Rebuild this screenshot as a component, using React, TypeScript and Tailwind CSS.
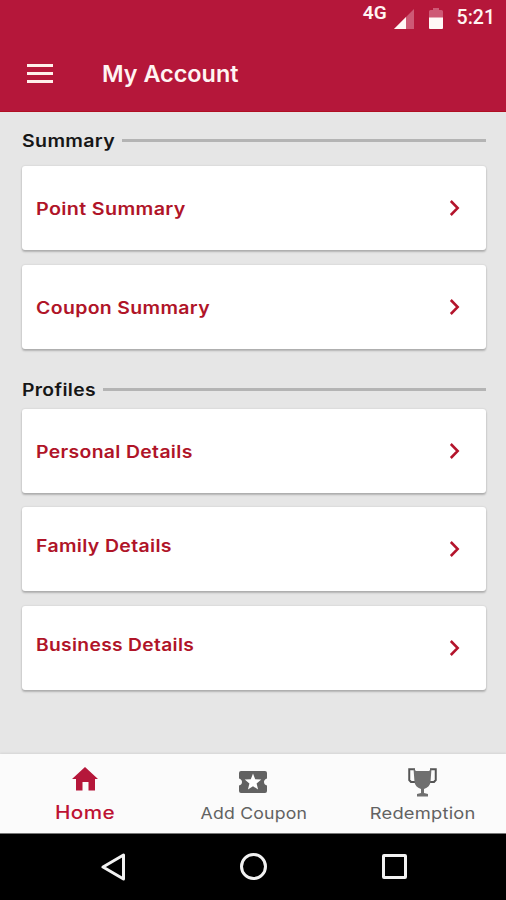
import React from "react";

const FONT = "font-['Inter','Liberation_Sans',sans-serif]";

function Chevron() {
  return (
    <svg className="h-[18px] w-[12px] shrink-0" viewBox="0 0 12 18" fill="none" stroke="#b4142c" strokeWidth="2.5">
      <path d="M1.8 2 8.7 9 1.800 16" />
    </svg>
  );
}

function Section({ title, line, fit, className }: { title: string; line: string; fit: string; className: string }) {
  return (
    <div className={`flex h-6 items-center ${className}`}>
      <h2 className="w-0 pt-[3px] whitespace-nowrap text-[17px] font-semibold text-[#161616]">
        <span className={`inline-block origin-left tracking-[0.3px] ${fit}`}>{title}</span>
      </h2>
      <div className={`h-[3px] flex-1 bg-[#b4b4b4] ${line}`} />
    </div>
  );
}

function Card({ label, fit, raised = false }: { label: string; fit: string; raised?: boolean }) {
  return (
    <button className="flex h-[84px] w-full items-center justify-between rounded-[3px] bg-white pl-[14px] pr-[25px] text-left shadow-[0_2px_2px_rgba(0,0,0,0.22),0_0_2px_rgba(0,0,0,0.16)]">
      <span className={`inline-block origin-left whitespace-nowrap text-[17px] leading-6 font-semibold tracking-[0.3px] text-[#b01428] ${fit} ${raised ? "pb-[6px]" : "pt-[2px]"}`}>
        {label}
      </span>
      <Chevron />
    </button>
  );
}

export default function App() {
  return (
    <div className={`flex h-[900px] w-[506px] flex-col overflow-hidden bg-[#e6e6e6] ${FONT}`}>
      <header className="h-[112px] shrink-0 border-b border-[#b00f22] bg-[#b5173a] text-[#fff4f2]">
        <div className="flex h-9 items-center justify-end pr-[11px] font-['Roboto',sans-serif]">
          <span className="mr-[7px] pb-[10px] text-[19px] leading-5 font-semibold">4G</span>
          <svg className="mt-[2px] h-5 w-5" viewBox="0 0 20 20">
            <path d="M20 0v20H0z" fill="#ce5975" />
            <path d="M12 8v12H0z" fill="#fff8f6" />
          </svg>
          <svg className="mt-[1px] ml-[15px] h-[21px] w-[14px]" viewBox="0 0 14 21">
            <path d="M0 3.500Q0 2 1.500 2H4V0h6v2h2.500Q14 2 14 3.500V10H0z" fill="#ce5975" />
            <path d="M0 9.500h14V20q0 1-1 1H1q-1 0-1-1z" fill="#fff8f6" />
          </svg>
          <span className="ml-[14px] text-[19.500px] font-medium">5:21</span>
        </div>
        <div className="flex h-[74px] items-center pl-[27px]">
          <div className="flex w-[26px] flex-col gap-[5px]">
            <div className="h-[3px] bg-[#fff0eb]" />
            <div className="h-[3px] bg-[#fff0eb]" />
            <div className="h-[3px] bg-[#fff0eb]" />
          </div>
          <h1 className="ml-[49px] pt-[1px] text-[22.500px] font-semibold">
            <span className="inline-block origin-left scale-x-[1.04] whitespace-nowrap">My Account</span>
          </h1>
        </div>
      </header>
      <main className="flex-1 pr-[20px] pl-[22px]">
        <Section title="Summary" line="ml-[100px]" fit="scale-x-[1.15]" className="mt-[16px]" />
        <div className="mt-[14px] flex flex-col gap-[14.5px]">
          <Card label="Point Summary" fit="scale-x-[1.16]" />
          <Card label="Coupon Summary" fit="scale-x-[1.145]" />
        </div>
        <Section title="Profiles" line="ml-[81px]" fit="scale-x-[1.135]" className="mt-[28.500px]" />
        <div className="mt-[7.5px] flex flex-col gap-[14.5px]">
          <Card label="Personal Details" fit="scale-x-[1.14]" />
          <Card label="Family Details" fit="scale-x-[1.145]" raised />
          <Card label="Business Details" fit="scale-x-[1.13]" raised />
        </div>
      </main>
      <nav className="grid h-[80px] shrink-0 grid-cols-3 border-b border-[#777] bg-[#fbfbfb] text-[#626262] shadow-[0_-1px_2px_rgba(0,0,0,0.08)]">
        <div className="flex flex-col items-center pl-[1px] text-[#b5173a]">
          <svg className="mt-[13px] h-[24px] w-[26px]" viewBox="0 0 26 24" fill="currentColor">
            <path d="M13 0 26 12h-3v11.500h-6.500v-8.500h-6v8.500H4V12H0z" />
          </svg>
          <span className="mt-[10px] inline-block scale-x-[1.15] text-[18px] leading-6 font-medium tracking-[0.3px] text-[#bd1233]">Home</span>
        </div>
        <div className="flex flex-col items-center pl-[1px]">
          <svg className="mt-[17px] h-[22px] w-[28px]" viewBox="0 0 28 22">
            <path d="M2 0h24q2 0 2 2v5.500q-3 1-3 3.500t3 3.500V20q0 2-2 2H2q-2 0-2-2v-5.500q3-1 3-3.500T0 7.500V2q0-2 2-2z" fill="#626262" />
            <path d="m14 2.500 2.200 5.700 6.100.4-4.700 3.900 1.500 6-5.100-3.300-5.100 3.300 1.500-6-4.700-3.900 6.100-.4z" fill="#fff" />
          </svg>
          <span className="mt-[8px] inline-block scale-x-[1.07] whitespace-nowrap text-[16.500px] leading-6 tracking-[0.2px]">Add Coupon</span>
        </div>
        <div className="flex flex-col items-center pl-[1px]">
          <svg className="mt-[14px] h-[29px] w-[29px]" viewBox="0 0 29 29">
            <path d="M7 1.250H1.250V12L3 14h4.500M22 1.250h5.750V12L26 14h-4.500" fill="none" stroke="#555" strokeWidth="2" />
            <path d="M5.500.5 8 3h13L23.500.5 22.500 14q-.5 5-6.500 7v4l4 1v2.500H9V26l4-1v-4q-6-2-6.500-7z" fill="#6f6f6f" />
          </svg>
          <span className="mt-[4px] inline-block scale-x-[1.11] whitespace-nowrap text-[16.500px] leading-6 tracking-[0.2px]">Redemption</span>
        </div>
      </nav>
      <footer className="flex h-[66px] shrink-0 items-center bg-black pb-px pl-[100px]">
        <svg className="h-[28px] w-[26px]" viewBox="0 0 26 28" fill="none" stroke="#f2f2f2" strokeWidth="3" strokeLinejoin="round">
          <path d="M23.500 2v24L3 14z" />
        </svg>
        <div className="ml-[114px] size-[27px] rounded-full border-[3px] border-[#f2f2f2]" />
        <div className="ml-[115px] size-[25px] rounded-[2px] border-[3px] border-[#f2f2f2]" />
      </footer>
    </div>
  );
}
